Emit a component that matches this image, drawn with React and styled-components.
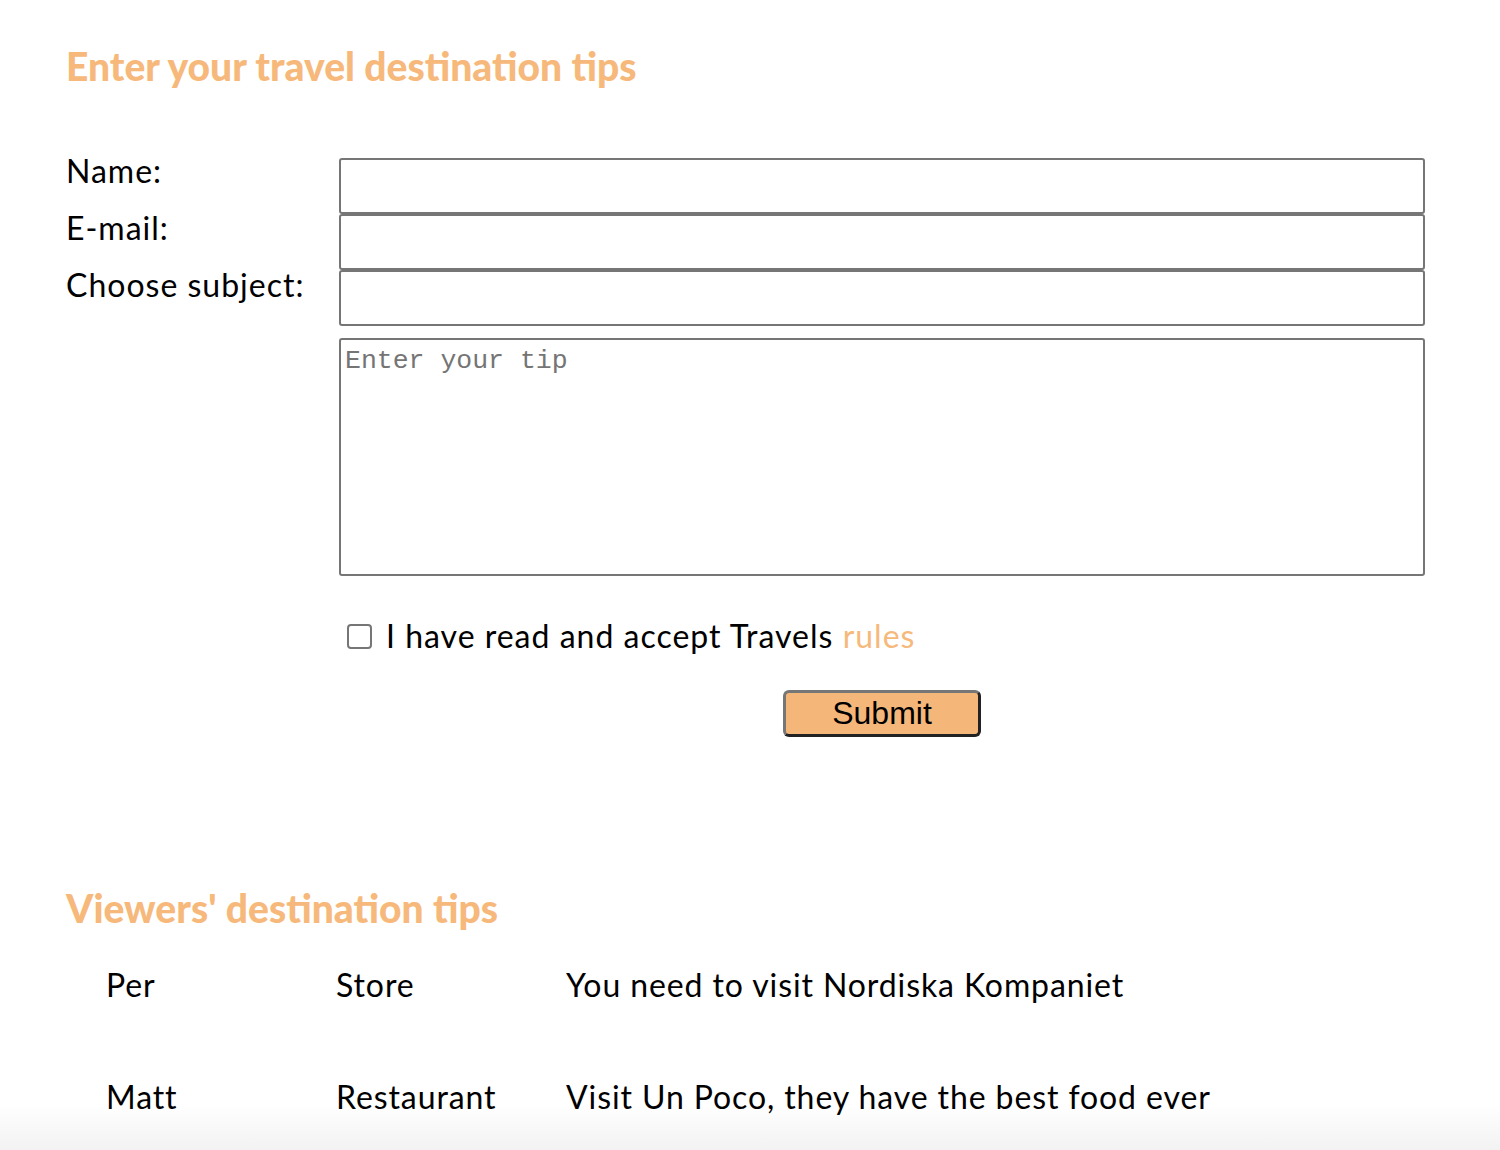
import React from 'react';
import styled, { createGlobalStyle } from 'styled-components';

const accent = '#f6b97b';

const GlobalStyle = createGlobalStyle`
  html {
    min-height: 100%;
    background: linear-gradient(to bottom, #ffffff 0, #ffffff 1105px, #f2f2f2 1150px);
  }
  body {
    margin: 0;
    font-family: Lato, "Noto Sans", sans-serif;
    color: #000;
  }
`;

const Page = styled.main`
  padding: 0 75px 0 66px;
`;

const Title = styled.h2`
  margin: 0;
  font-size: 39px;
  font-weight: 900;
  color: ${accent};
  line-height: 48px;
  letter-spacing: 0;
`;

const FormSection = styled.section`
  padding-top: 42px;
`;

const FormGrid = styled.form`
  display: grid;
  grid-template-columns: 273px 1fr;
  padding-top: 68px;
`;

const Labels = styled.div`
  display: flex;
  flex-direction: column;
  margin-top: -16px;
`;

const Label = styled.label`
  font-size: 32px;
  line-height: 57px;
  letter-spacing: 1px;
`;

const Fields = styled.div`
  display: flex;
  flex-direction: column;
`;

const Input = styled.input`
  box-sizing: border-box;
  height: 56px;
  width: 100%;
  border: 2px solid #767676;
  border-radius: 3px;
  background: #fff;
  font-size: 20px;
  padding: 0 6px;
`;

const TextArea = styled.textarea`
  box-sizing: border-box;
  margin-top: 12px;
  height: 238px;
  width: 100%;
  border: 2px solid #767676;
  border-radius: 3px;
  padding: 4px 4px;
  font-family: "Liberation Mono", "Courier New", monospace;
  font-size: 26.5px;
  line-height: 34px;
  resize: none;

  &::placeholder {
    color: #757575;
  }
`;

const CheckRow = styled.div`
  display: flex;
  align-items: center;
  gap: 14px;
  margin-top: 41px;
  padding-left: 8px;
  font-size: 32px;
  line-height: 38px;
  letter-spacing: 1px;
`;

const Check = styled.input`
  box-sizing: border-box;
  width: 25px;
  height: 25px;
  margin: 0;
  appearance: none;
  border: 2px solid #767676;
  border-radius: 4px;
  background: #fff;
`;

const RulesLink = styled.a`
  color: ${accent};
  text-decoration: none;
`;

const ButtonRow = styled.div`
  display: flex;
  justify-content: center;
  margin-top: 35px;
`;

const SubmitButton = styled.button`
  box-sizing: border-box;
  width: 198px;
  height: 47px;
  background: #f5b67a;
  border: 3px solid;
  border-color: #767676 #222 #222 #767676;
  border-radius: 6px;
  font-family: "Liberation Sans", Arial, sans-serif;
  font-size: 32px;
  color: #000;
  padding: 0;
`;

const TipsSection = styled.section`
  padding-top: 147px;
`;

const TipList = styled.div`
  display: flex;
  flex-direction: column;
  gap: 74px;
  padding: 34px 0 0 40px;
`;

const TipRow = styled.div`
  display: grid;
  grid-template-columns: 230px 230px 1fr;
  font-size: 32px;
  line-height: 38px;
  letter-spacing: 0.9px;
`;

const tips = [
  { name: 'Per', subject: 'Store', text: 'You need to visit Nordiska Kompaniet' },
  { name: 'Matt', subject: 'Restaurant', text: 'Visit Un Poco, they have the best food ever' },
];

export default function App() {
  return (
    <>
      <GlobalStyle />
      <Page>
        <FormSection>
          <Title>Enter your travel destination tips</Title>
          <FormGrid onSubmit={(e) => e.preventDefault()}>
            <Labels>
              <Label htmlFor="name">Name:</Label>
              <Label htmlFor="email">E-mail:</Label>
              <Label htmlFor="subject">Choose subject:</Label>
            </Labels>
            <Fields>
              <Input id="name" type="text" />
              <Input id="email" type="email" />
              <Input id="subject" type="text" />
              <TextArea placeholder="Enter your tip" />
              <CheckRow>
                <Check type="checkbox" id="accept" />
                <label htmlFor="accept">
                  I have read and accept Travels <RulesLink href="#">rules</RulesLink>
                </label>
              </CheckRow>
              <ButtonRow>
                <SubmitButton type="submit">Submit</SubmitButton>
              </ButtonRow>
            </Fields>
          </FormGrid>
        </FormSection>
        <TipsSection>
          <Title>Viewers' destination tips</Title>
          <TipList>
            {tips.map((t) => (
              <TipRow key={t.name}>
                <span>{t.name}</span>
                <span>{t.subject}</span>
                <span>{t.text}</span>
              </TipRow>
            ))}
          </TipList>
        </TipsSection>
      </Page>
    </>
  );
}
